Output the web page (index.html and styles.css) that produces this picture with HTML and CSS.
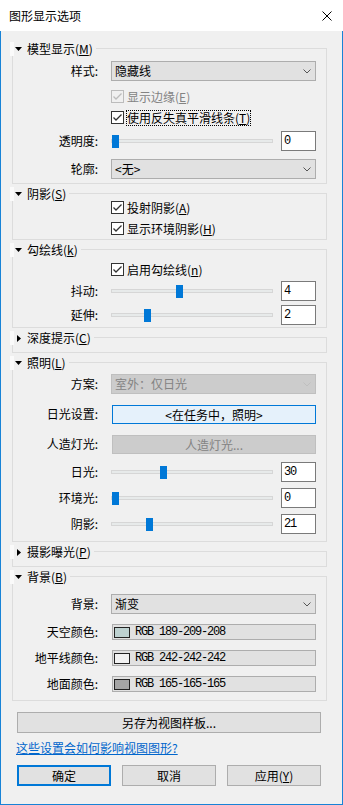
FILE: index.html
```html
<!DOCTYPE html>
<html lang="zh-CN">

<head>
    <meta charset="UTF-8">
    <meta name="viewport" content="width=device-width, initial-scale=1.0">
    <title>图形显示选项</title>
    <link rel="stylesheet" href="styles.css">
</head>

<body>
    <div class="window">
        <div class="titlebar">
            <span class="title">图形显示选项</span>
            <svg class="close" width="10" height="10" viewBox="0 0 10 10">
                <path d="M0.5 0.5L9.5 9.5M9.5 0.5L0.5 9.5" stroke="#000" stroke-width="1" fill="none" />
            </svg>
        </div>

        <div class="dialog">
            <!-- 模型显示 -->
            <section class="group">
                <div class="group-head">
                    <span class="mark"></span>
                    <span class="caret"><svg width="7" height="4"><path d="M0 0h7L3.5 4z" /></svg></span>
                    <span class="group-title">模型显示(<u>M</u>)</span>
                    <span class="rule"></span>
                </div>
                <div class="group-body body-model">
                    <div class="row sel-row">
                        <span class="lbl">样式:</span>
                        <div class="select">
                            <span>隐藏线</span>
                            <svg class="chev" width="8" height="5"><path d="M0.5 0.5L4 4L7.5 0.5" /></svg>
                        </div>
                    </div>
                    <div class="row check disabled">
                        <span class="box"><svg width="11" height="11"><path d="M1.5 5.5L4 8L9.5 2.5" /></svg></span>
                        <span class="check-text">显示边缘(<u>E</u>)</span>
                    </div>
                    <div class="row check">
                        <span class="box"><svg width="11" height="11"><path d="M1.5 5.5L4 8L9.5 2.5" /></svg></span>
                        <span class="check-text focus">使用反失真平滑线条(<u>T</u>)</span>
                    </div>
                    <div class="row slider">
                        <span class="lbl">透明度:</span>
                        <div class="track"><span class="thumb" style="left: 0%"></span></div>
                        <div class="num">0</div>
                    </div>
                    <div class="row sel-row">
                        <span class="lbl">轮廓:</span>
                        <div class="select">
                            <span>&lt;无&gt;</span>
                            <svg class="chev" width="8" height="5"><path d="M0.5 0.5L4 4L7.5 0.5" /></svg>
                        </div>
                    </div>
                </div>
            </section>

            <!-- 阴影 -->
            <section class="group">
                <div class="group-head">
                    <span class="mark"></span>
                    <span class="caret"><svg width="7" height="4"><path d="M0 0h7L3.5 4z" /></svg></span>
                    <span class="group-title">阴影(<u>S</u>)</span>
                    <span class="rule"></span>
                </div>
                <div class="group-body body-shadow">
                    <div class="row check">
                        <span class="box"><svg width="11" height="11"><path d="M1.5 5.5L4 8L9.5 2.5" /></svg></span>
                        <span class="check-text">投射阴影(<u>A</u>)</span>
                    </div>
                    <div class="row check">
                        <span class="box"><svg width="11" height="11"><path d="M1.5 5.5L4 8L9.5 2.5" /></svg></span>
                        <span class="check-text">显示环境阴影(<u>H</u>)</span>
                    </div>
                </div>
            </section>

            <!-- 勾绘线 -->
            <section class="group">
                <div class="group-head">
                    <span class="mark"></span>
                    <span class="caret"><svg width="7" height="4"><path d="M0 0h7L3.5 4z" /></svg></span>
                    <span class="group-title">勾绘线(<u>k</u>)</span>
                    <span class="rule"></span>
                </div>
                <div class="group-body body-sketch">
                    <div class="row check">
                        <span class="box"><svg width="11" height="11"><path d="M1.5 5.5L4 8L9.5 2.5" /></svg></span>
                        <span class="check-text">启用勾绘线(<u>n</u>)</span>
                    </div>
                    <div class="row slider">
                        <span class="lbl">抖动:</span>
                        <div class="track"><span class="thumb" style="left: 40%"></span></div>
                        <div class="num">4</div>
                    </div>
                    <div class="row slider">
                        <span class="lbl">延伸:</span>
                        <div class="track"><span class="thumb" style="left: 20%"></span></div>
                        <div class="num">2</div>
                    </div>
                </div>
            </section>

            <!-- 深度提示 -->
            <section class="group">
                <div class="group-head">
                    <span class="mark"></span>
                    <span class="caret closed"><svg width="4" height="7"><path d="M0 0v7l4-3.5z" /></svg></span>
                    <span class="group-title">深度提示(<u>C</u>)</span>
                    <span class="rule"></span>
                </div>
                <div class="group-body body-empty"></div>
            </section>

            <!-- 照明 -->
            <section class="group">
                <div class="group-head">
                    <span class="mark"></span>
                    <span class="caret"><svg width="7" height="4"><path d="M0 0h7L3.5 4z" /></svg></span>
                    <span class="group-title">照明(<u>L</u>)</span>
                    <span class="rule"></span>
                </div>
                <div class="group-body body-light">
                    <div class="row sel-row">
                        <span class="lbl">方案:</span>
                        <div class="select disabled">
                            <span>室外：仅日光</span>
                            <svg class="chev" width="8" height="5"><path d="M0.5 0.5L4 4L7.5 0.5" /></svg>
                        </div>
                    </div>
                    <div class="row sel-row">
                        <span class="lbl">日光设置:</span>
                        <div class="field-btn active">&lt;在任务中，照明&gt;</div>
                    </div>
                    <div class="row sel-row">
                        <span class="lbl">人造灯光:</span>
                        <div class="field-btn disabled">人造灯光...</div>
                    </div>
                    <div class="row slider">
                        <span class="lbl">日光:</span>
                        <div class="track"><span class="thumb" style="left: 30%"></span></div>
                        <div class="num">30</div>
                    </div>
                    <div class="row slider">
                        <span class="lbl">环境光:</span>
                        <div class="track"><span class="thumb" style="left: 0%"></span></div>
                        <div class="num">0</div>
                    </div>
                    <div class="row slider">
                        <span class="lbl">阴影:</span>
                        <div class="track"><span class="thumb" style="left: 21%"></span></div>
                        <div class="num">21</div>
                    </div>
                </div>
            </section>

            <!-- 摄影曝光 -->
            <section class="group">
                <div class="group-head">
                    <span class="mark"></span>
                    <span class="caret closed"><svg width="4" height="7"><path d="M0 0v7l4-3.5z" /></svg></span>
                    <span class="group-title">摄影曝光(<u>P</u>)</span>
                    <span class="rule"></span>
                </div>
                <div class="group-body body-empty"></div>
            </section>

            <!-- 背景 -->
            <section class="group">
                <div class="group-head">
                    <span class="mark"></span>
                    <span class="caret"><svg width="7" height="4"><path d="M0 0h7L3.5 4z" /></svg></span>
                    <span class="group-title">背景(<u>B</u>)</span>
                    <span class="rule"></span>
                </div>
                <div class="group-body body-bg">
                    <div class="row sel-row">
                        <span class="lbl">背景:</span>
                        <div class="select">
                            <span>渐变</span>
                            <svg class="chev" width="8" height="5"><path d="M0.5 0.5L4 4L7.5 0.5" /></svg>
                        </div>
                    </div>
                    <div class="row color">
                        <span class="lbl">天空颜色:</span>
                        <div class="color-field">
                            <span class="swatch" style="background: rgb(189, 209, 208)"></span>
                            <span class="mono">RGB 189-209-208</span>
                        </div>
                    </div>
                    <div class="row color">
                        <span class="lbl">地平线颜色:</span>
                        <div class="color-field">
                            <span class="swatch" style="background: rgb(242, 242, 242)"></span>
                            <span class="mono">RGB 242-242-242</span>
                        </div>
                    </div>
                    <div class="row color">
                        <span class="lbl">地面颜色:</span>
                        <div class="color-field">
                            <span class="swatch" style="background: rgb(165, 165, 165)"></span>
                            <span class="mono">RGB 165-165-165</span>
                        </div>
                    </div>
                </div>
            </section>

            <button class="save-btn">另存为视图样板...</button>
            <a class="help-link" href="#">这些设置会如何影响视图图形?</a>

            <div class="actions">
                <button class="default">确定</button>
                <button>取消</button>
                <button>应用(<u>Y</u>)</button>
            </div>
        </div>
    </div>
</body>

</html>
```

FILE: styles.css
```css
* {
    box-sizing: border-box;
}

body {
    margin: 0;
    font-family: "Noto Sans CJK SC", "Noto Sans", sans-serif;
    font-size: 12px;
    color: #000;
    background: #fff;
}

.window {
    width: 343px;
    height: 805px;
    display: flex;
    flex-direction: column;
}

.titlebar {
    height: 31px;
    display: flex;
    align-items: center;
    justify-content: space-between;
    padding: 0 11px 0 9px;
    background: #fff;
}

.title {
    line-height: 14px;
}

.dialog {
    flex: 1;
    background: #f0f0f0;
    border: 1px solid #1883d7;
    border-top: none;
    padding: 8px 15px 0 9px;
}

/* group boxes */
.group {
    margin-top: 3px;
}

.group-head {
    display: flex;
    align-items: center;
    height: 14px;
}

.mark {
    width: 4px;
    height: 14px;
    background: #fafafa;
}

.caret {
    width: 13px;
    height: 14px;
    display: flex;
    align-items: center;
    padding-left: 1px;
}

.caret.closed {
    padding-left: 3px;
}

.caret svg {
    fill: #000;
}

.group-title {
    line-height: 14px;
    padding-right: 3px;
    white-space: nowrap;
}

.rule {
    flex: 1;
    align-self: flex-end;
    height: 8px;
    border-top: 1px solid #dcdcdc;
    border-right: 1px solid #dcdcdc;
}

.group-body {
    margin-left: 2px;
    border: 1px solid #dcdcdc;
    border-top: none;
    display: flex;
    flex-direction: column;
    gap: 8px;
    padding-right: 10px;
}

.body-model {
    padding-top: 4px;
    padding-bottom: 3px;
}

.body-shadow {
    padding-top: 0;
    padding-bottom: 4px;
}

.body-sketch {
    gap: 6px;
    padding-top: 6px;
    padding-bottom: 3px;
}

.body-empty {
    height: 8px;
}

.body-light {
    padding-top: 3px;
    padding-bottom: 8px;
}

.body-bg {
    padding-top: 9px;
    padding-bottom: 7px;
}

/* rows */
.row {
    display: flex;
    align-items: center;
}

.sel-row {
    height: 22px;
}

.check {
    height: 13px;
    padding-left: 98px;
}

.slider,
.color {
    height: 18px;
}

.lbl {
    width: 85px;
    flex-shrink: 0;
    margin-right: 13px;
    text-align: right;
    line-height: 14px;
    white-space: nowrap;
}

.select {
    flex: 1;
    height: 20px;
    display: flex;
    align-items: center;
    justify-content: space-between;
    padding: 0 4px 0 3px;
    background: #e1e1e1;
    border: 1px solid #adadad;
    line-height: 14px;
}

.chev {
    fill: none;
    stroke: #555;
    stroke-width: 1;
}

.select.disabled {
    background: #cccccc;
    border-color: #bfbfbf;
    color: #838383;
}

.select.disabled .chev {
    stroke: #bfbfbf;
}

.field-btn {
    flex: 1;
    height: 19px;
    margin-left: 1px;
    line-height: 17px;
    text-align: center;
    border: 1px solid #adadad;
    background: #e1e1e1;
}

.field-btn.active {
    background: #e5f1fb;
    border-color: #0078d7;
}

.field-btn.disabled {
    background: #cccccc;
    border-color: #bfbfbf;
    color: #838383;
}

/* checkboxes */
.box {
    width: 13px;
    height: 13px;
    flex-shrink: 0;
    border: 1px solid #333;
    background: #fff;
    margin-right: 3px;
}

.box svg {
    display: block;
    fill: none;
    stroke: #333;
    stroke-width: 1.3;
}

.check.disabled .box {
    border-color: #bcbcbc;
    background: #f0f0f0;
}

.check.disabled .box svg {
    stroke: #bcbcbc;
}

.check.disabled .check-text {
    color: #838383;
}

.check-text {
    line-height: 14px;
    white-space: nowrap;
}

.check-text.focus {
    outline: 1px dotted #000;
    outline-offset: 0;
}

/* sliders */
.track {
    flex: 1;
    position: relative;
    height: 4px;
    margin-right: 8px;
    background: #e7eaea;
    border: 1px solid #d6d6d6;
}

.thumb {
    position: absolute;
    top: -5px;
    width: 7px;
    height: 13px;
    background: #0078d7;
}

.num {
    width: 35px;
    height: 20px;
    flex-shrink: 0;
    padding-left: 2px;
    background: #fff;
    border: 1px solid #7a7a7a;
    font-family: "Liberation Mono", monospace;
    font-size: 12px;
    letter-spacing: -1.2px;
    line-height: 18px;
}

/* colour fields */
.color-field {
    flex: 1;
    height: 16px;
    display: flex;
    align-items: center;
    padding-left: 1px;
    margin-left: 1px;
    background: #e1e1e1;
    border: 1px solid #adadad;
}

.swatch {
    width: 16px;
    height: 11px;
    border: 1px solid #222;
    margin-right: 5px;
}

.mono {
    font-family: "Liberation Mono", monospace;
    font-size: 12px;
    letter-spacing: -1.2px;
    line-height: 14px;
}

/* footer */
button {
    font-family: inherit;
    font-size: 12px;
    color: #000;
    background: #e1e1e1;
    border: 1px solid #adadad;
    padding: 0;
    line-height: 14px;
}

.save-btn {
    display: block;
    width: 304px;
    height: 21px;
    margin: 11px 0 0 7px;
}

.help-link {
    display: block;
    width: max-content;
    margin: 8px 0 0 6px;
    line-height: 14px;
    color: #0066cc;
    text-decoration: underline;
}

.actions {
    display: flex;
    gap: 11px;
    margin: 10px 0 0 7px;
}

.actions button {
    width: 94px;
    height: 21px;
}

.actions .default {
    border: 2px solid #0078d7;
}
```
